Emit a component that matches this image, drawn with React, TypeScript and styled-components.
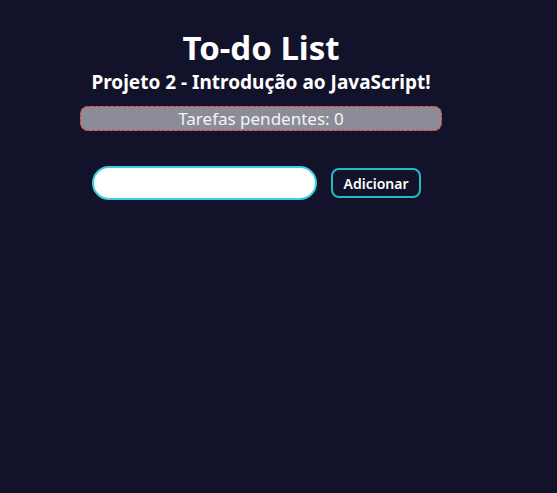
import React, { useState } from 'react'
import styled, { createGlobalStyle } from 'styled-components'

const Global = createGlobalStyle`
  html, body {
    margin: 0;
    padding: 0;
    background-color: #12132b;
    font-family: 'Noto Sans', 'Open Sans', sans-serif;
    color: #ffffff;
  }
`

const Page = styled.div`
  min-height: 493px;
  background-color: #12132b;
  padding-top: 26px;
  box-sizing: border-box;
`

const Container = styled.div`
  width: 362px;
  margin-left: 80px;
  display: flex;
  flex-direction: column;
  align-items: center;
`

const Title = styled.h1`
  margin: 0;
  font-size: 33px;
  line-height: 44px;
  font-weight: 700;
`

const Subtitle = styled.h2`
  margin: 0;
  font-size: 19px;
  line-height: 24px;
  font-weight: 700;
`

const Pending = styled.div`
  margin-top: 12px;
  width: 100%;
  height: 25px;
  box-sizing: border-box;
  background-color: #8b8c97;
  border: 1px dashed #ff2a2a;
  border-radius: 8px;
  text-align: center;
  font-size: 17px;
  line-height: 23px;
  color: #f4f4f4;
`

const Form = styled.form`
  margin-top: 35px;
  align-self: stretch;
  padding-left: 12px;
  display: flex;
  align-items: center;
  gap: 14px;
`

const Input = styled.input`
  width: 225px;
  height: 34px;
  box-sizing: border-box;
  border: 2px solid #3ccfe0;
  border-radius: 17px;
  background: #ffffff;
  outline: none;
  padding: 0 12px;
  font-size: 14px;
`

const Button = styled.button`
  height: 30px;
  width: 90px;
  box-sizing: border-box;
  background: #12132b;
  border: 2px solid #2bb5c6;
  border-radius: 8px;
  color: #ffffff;
  font-family: inherit;
  font-size: 14px;
  font-weight: 600;
  cursor: pointer;
`

export default function App() {
  const [tasks, setTasks] = useState<string[]>([])
  const [text, setText] = useState('')

  const add = (e: React.FormEvent) => {
    e.preventDefault()
    if (!text.trim()) return
    setTasks([...tasks, text.trim()])
    setText('')
  }

  return (
    <Page>
      <Global />
      <Container>
        <Title>To-do List</Title>
        <Subtitle>Projeto 2 - Introdução ao JavaScript!</Subtitle>
        <Pending>Tarefas pendentes: {tasks.length}</Pending>
        <Form onSubmit={add}>
          <Input value={text} onChange={e => setText(e.target.value)} />
          <Button type="submit">Adicionar</Button>
        </Form>
      </Container>
    </Page>
  )
}
